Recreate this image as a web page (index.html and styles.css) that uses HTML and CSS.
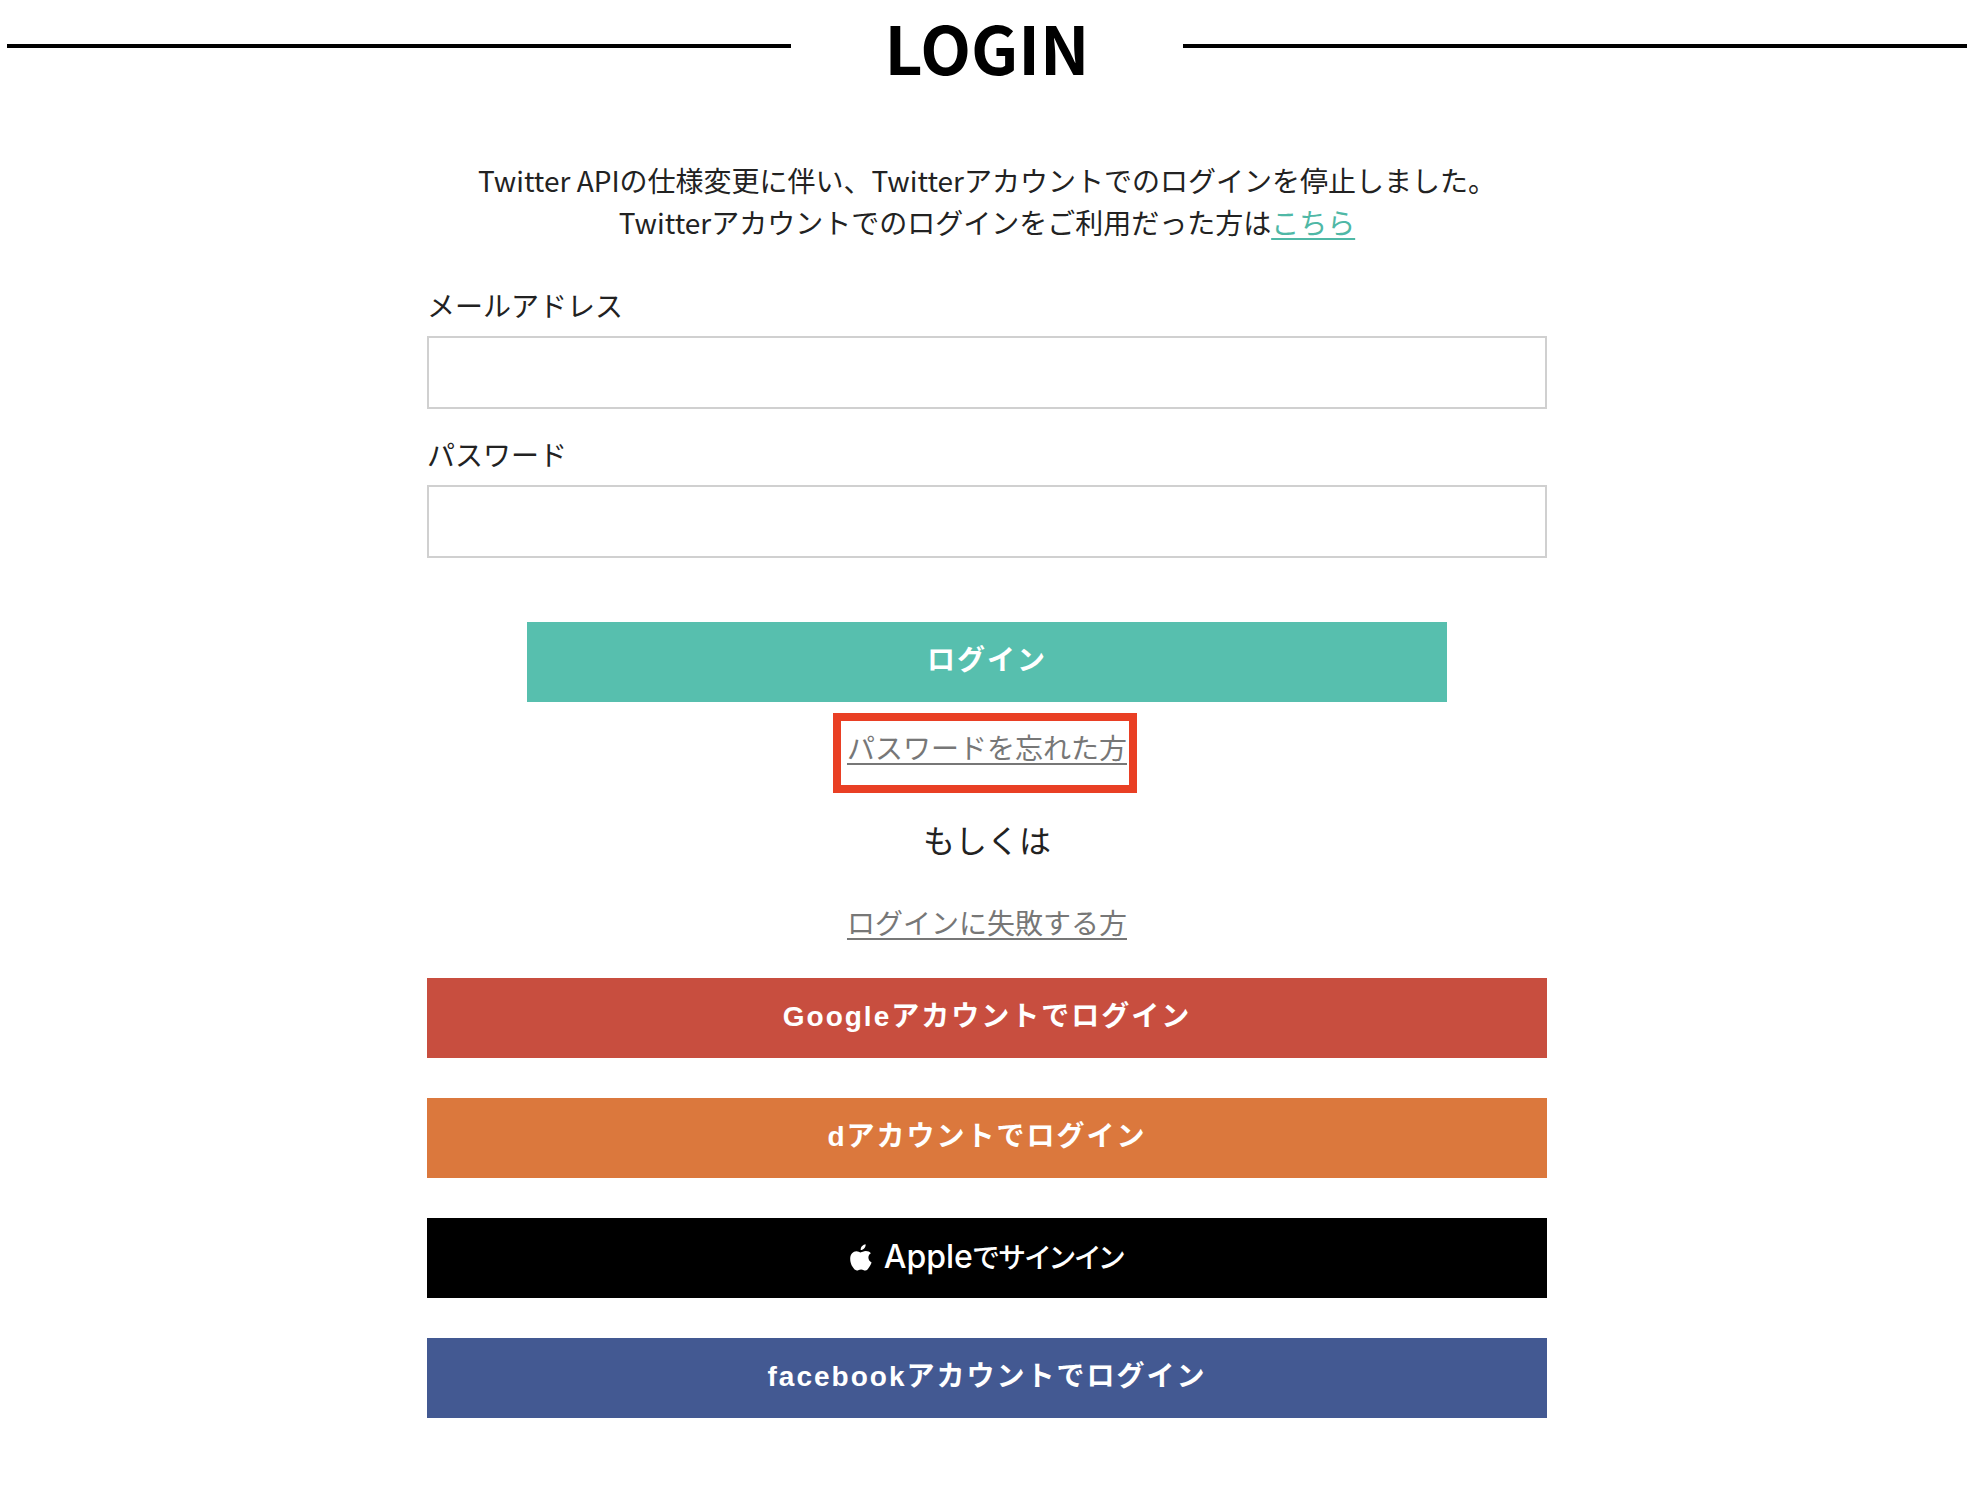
FILE: index.html
```html
<!DOCTYPE html>
<html lang="ja">
<head>
<meta charset="utf-8">
<meta name="viewport" content="width=device-width, initial-scale=1">
<title>LOGIN</title>
<link rel="stylesheet" href="styles.css">
</head>
<body>
<header class="page-header">
  <h1 class="page-title">LOGIN</h1>
</header>
<main class="login">
  <p class="notice">Twitter APIの仕様変更に伴い、Twitterアカウントでのログインを停止しました。<br>Twitterアカウントでのログインをご利用だった方は<a class="notice-link" href="#">こちら</a></p>
  <form class="login-form">
    <div class="field">
      <label for="email">メールアドレス</label>
      <input id="email" name="email" type="email">
    </div>
    <div class="field">
      <label for="password">パスワード</label>
      <input id="password" name="password" type="password">
    </div>
    <button class="button button-login" type="submit">ログイン</button>
  </form>
  <p class="help highlighted"><a href="#">パスワードを忘れた方</a></p>
  <p class="or">もしくは</p>
  <p class="help"><a href="#">ログインに失敗する方</a></p>
  <div class="providers">
    <button class="button button-google" type="button">Googleアカウントでログイン</button>
    <button class="button button-d" type="button">dアカウントでログイン</button>
    <button class="button button-apple" type="button">
      <svg class="apple-logo" viewBox="0 0 22 27" aria-hidden="true"><path d="M15.6 0.2c.2 1.600-.4 3-1.300 4.100-.9 1.100-2.300 1.900-3.600 1.800-.2-1.500.5-3 1.400-4 .9-1.100 2.400-1.800 3.500-1.900zM20.900 9.300c-1.600 1-2.500 2.300-2.500 4.300 0 2.300 1.300 4 3.200 4.800-.5 1.600-1.300 3.100-2.300 4.600-1.200 1.700-2.200 3.500-4 3.500-1.700 0-2.200-1.100-4.200-1.100-2.100 0-2.700 1.100-4.300 1.100-1.700 0-2.900-1.600-4.100-3.400C1 20.600.2 17.600.2 14.700c0-4.700 3-7.500 6.100-7.500 1.800 0 3.300 1.200 4.400 1.200 1.100 0 2.900-1.300 5.100-1.300 2 0 3.900.8 5.100 2.200z"/></svg>
      <span>Apple<span class="apple-kana">でサインイン</span></span>
    </button>
    <button class="button button-facebook" type="button">facebookアカウントでログイン</button>
  </div>
</main>
</body>
</html>
```
FILE: styles.css
```css
* {
  box-sizing: border-box;
}

body {
  margin: 0;
  padding: 0 13px 0 7px;
  background: #fff;
  color: #222;
  font: 28px/42px "Noto Sans CJK JP", sans-serif;
}

h1,
p {
  margin: 0;
}

.page-title {
  display: grid;
  grid-template-columns: 2fr 1fr 2fr;
  align-items: center;
  color: #000;
  font-size: 66px;
  font-weight: 700;
  line-height: 92px;
  text-align: center;
}

.page-title::before,
.page-title::after {
  content: "";
  height: 4px;
  background: #000;
}

.login {
  max-width: 1120px;
  margin: 0 auto;
  padding: 67px 0 94px;
}

.notice {
  text-align: center;
}

.notice-link {
  color: #4fb8a6;
}

a {
  text-decoration-thickness: 2px;
  text-underline-offset: 4px;
}

.login-form {
  display: flex;
  flex-direction: column;
  gap: 24px;
  margin-top: 41px;
}

.field {
  display: flex;
  flex-direction: column;
  gap: 10px;
}

.field input {
  width: 100%;
  height: 73px;
  padding: 0 16px;
  border: 2px solid #d0d0d0;
  border-radius: 0;
  background: #fff;
  color: inherit;
  font: inherit;
}

.button {
  display: flex;
  align-items: center;
  justify-content: center;
  height: 80px;
  padding: 0 0 2px;
  border: 0;
  color: #fff;
  font: bold 28px/42px "Liberation Sans", "Noto Sans CJK JP", sans-serif;
  letter-spacing: 2px;
  cursor: pointer;
}

.button-login {
  margin: 40px 100px 0;
  background: #57bfae;
}

.help {
  text-align: center;
}

.help a {
  color: #777;
}

.highlighted {
  position: relative;
  width: 304px;
  margin: 24px auto 0;
}

.highlighted::after {
  content: "";
  position: absolute;
  inset: -13px 2px -25px -2px;
  border: 8px solid #e93f24;
  pointer-events: none;
}

.or {
  margin: 47px 0 38px;
  font-size: 32px;
  line-height: 48px;
  text-align: center;
}

.providers {
  display: grid;
  gap: 40px;
  margin-top: 35px;
}

.button-google {
  background: #c84e3f;
}

.button-d {
  background: #db783d;
}

.button-apple {
  gap: 12px;
  background: #000;
  font: 500 32px/42px Inter, "Noto Sans CJK JP", sans-serif;
  letter-spacing: normal;
}

.apple-logo {
  width: 22px;
  height: 27px;
  fill: #fff;
}

.apple-kana {
  font-size: 28px;
  font-feature-settings: "palt";
}

.button-facebook {
  background: #435992;
}
```
